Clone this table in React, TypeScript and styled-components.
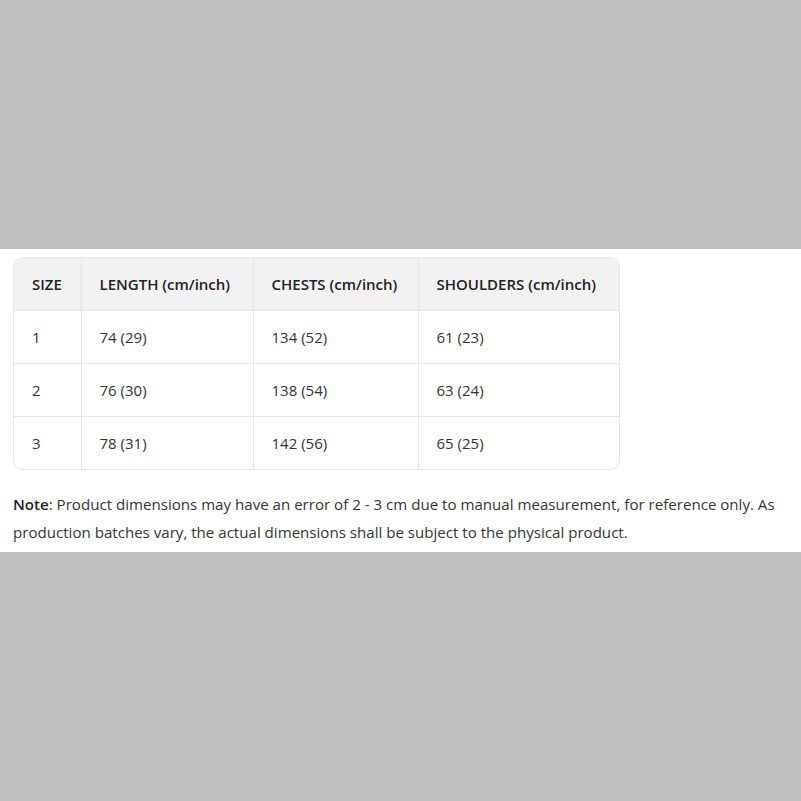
import React from "react";
import styled, { createGlobalStyle } from "styled-components";

const Global = createGlobalStyle`
  html, body { margin: 0; padding: 0; background: #bfbfbf; }
  body { font-family: "Open Sans", "Noto Sans", sans-serif; color: #333; }
  *, *::before, *::after { box-sizing: border-box; }
`;

const Page = styled.div`
  min-height: 801px;
  padding-top: 249px;
`;

const Band = styled.section`
  background: #fff;
  padding: 8px 13px 6px;
`;

const TableWrap = styled.div`
  width: 607px;
  border: 1px solid #e6e6e6;
  border-radius: 10px;
  overflow: hidden;
`;

const Table = styled.table`
  width: 100%;
  border-collapse: collapse;
  table-layout: fixed;
  font-size: 15px;
`;

const Th = styled.th<{ $w: number }>`
  width: ${(p) => p.$w}px;
  height: 52px;
  background: #f2f2f2;
  text-align: left;
  font-weight: 600;
  color: #222;
  padding: 0 0 0 18px;
  border-left: 1px solid #e6e6e6;
  border-bottom: 1px solid #e6e6e6;
  white-space: nowrap;
  &:first-child { border-left: none; }
`;

const Td = styled.td`
  height: 53px;
  padding: 0 0 0 18px;
  border-left: 1px solid #e6e6e6;
  border-top: 1px solid #e6e6e6;
  color: #333;
  &:first-child { border-left: none; }
`;

const Row = styled.tr`
  &:first-child td { border-top: none; }
`;

const Note = styled.p`
  margin: 20px 0 0;
  font-size: 15.1px;
  line-height: 28px;
  color: #333;
  b { font-weight: 600; color: #222; }
`;

const cols = [
  { label: "SIZE", w: 67 },
  { label: "LENGTH (cm/inch)", w: 172 },
  { label: "CHESTS (cm/inch)", w: 165 },
  { label: "SHOULDERS (cm/inch)", w: 201 },
];

const rows = [
  ["1", "74 (29)", "134 (52)", "61 (23)"],
  ["2", "76 (30)", "138 (54)", "63 (24)"],
  ["3", "78 (31)", "142 (56)", "65 (25)"],
];

export default function App() {
  return (
    <Page>
      <Global />
      <Band>
        <TableWrap>
          <Table>
            <thead>
              <tr>
                {cols.map((c) => (
                  <Th key={c.label} $w={c.w}>{c.label}</Th>
                ))}
              </tr>
            </thead>
            <tbody>
              {rows.map((r) => (
                <Row key={r[0]}>
                  {r.map((v, i) => (
                    <Td key={i}>{v}</Td>
                  ))}
                </Row>
              ))}
            </tbody>
          </Table>
        </TableWrap>
        <Note>
          <b>Note</b>: Product dimensions may have an error of 2 - 3 cm due to manual measurement, for reference only. As production batches vary, the actual dimensions shall be subject to the physical product.
        </Note>
      </Band>
    </Page>
  );
}
